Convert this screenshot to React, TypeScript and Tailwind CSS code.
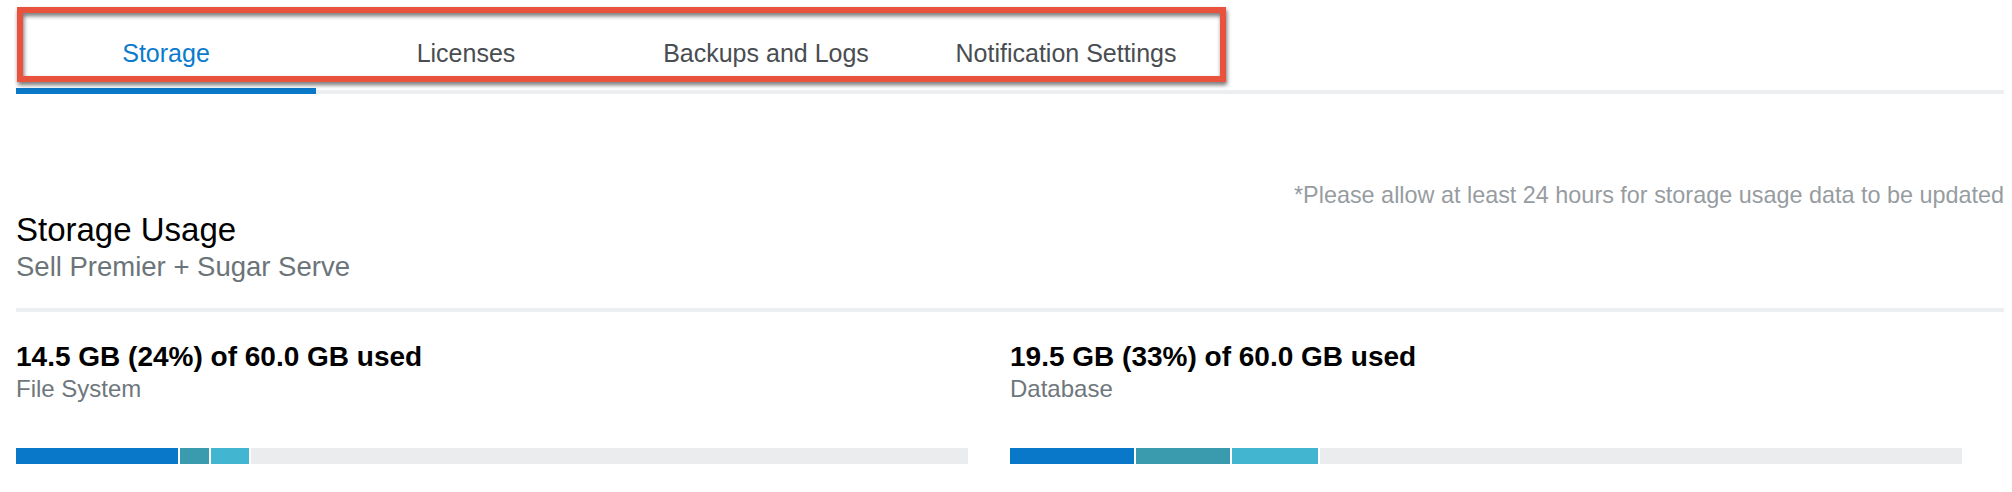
import React from "react";

type Seg = { w: number; color: string };

const tabs = ["Storage", "Licenses", "Backups and Logs", "Notification Settings"];

const usage: { value: string; label: string; segs: Seg[] }[] = [
  {
    value: "14.5 GB (24%) of 60.0 GB used",
    label: "File System",
    segs: [
      { w: 162, color: "bg-[#0a78c9]" },
      { w: 29, color: "bg-[#399bad]" },
      { w: 38, color: "bg-[#42b5d1]" },
    ],
  },
  {
    value: "19.5 GB (33%) of 60.0 GB used",
    label: "Database",
    segs: [
      { w: 124, color: "bg-[#0a78c9]" },
      { w: 94, color: "bg-[#399bad]" },
      { w: 86, color: "bg-[#42b5d1]" },
    ],
  },
];

export default function App() {
  return (
    <div
      className="relative w-[2012px] h-[492px] overflow-hidden bg-white pl-4 pr-2"
      style={{ fontFamily: '"Liberation Sans", Arial, sans-serif' }}
    >
      <nav className="flex h-[94px]">
        {tabs.map((t, i) => (
          <div
            key={t}
            className={
              i === 0
                ? "flex w-[300px] justify-center border-b-[6px] border-[#0a78c9] pt-[39px] text-[25px] leading-[28px] text-[#0b7bcd]"
                : "flex w-[300px] justify-center border-b-4 border-[#eceef0] pt-[39px] text-[25px] leading-[28px] text-[#494d51]"
            }
          >
            {t}
          </div>
        ))}
        <div className="flex-1 border-b-4 border-[#eceef0]" />
      </nav>

      <p className="mt-[88px] text-right text-[23.4px] leading-[26px] text-[#979ca1]">
        *Please allow at least 24 hours for storage usage data to be updated
      </p>

      <h1 className="mt-[5px] text-[33px] leading-[34px] text-black">Storage Usage</h1>
      <p className="mt-[5px] text-[27.5px] leading-[30px] text-[#6b7479]">Sell Premier + Sugar Serve</p>

      <div className="mt-[26px] h-[4px] bg-[#eceef0]" />

      <div className="mt-[30px] grid grid-cols-2">
        {usage.map((u) => (
          <div key={u.label} className="pr-[42px]">
            <div className="text-[28px] font-bold leading-[30px] text-black">{u.value}</div>
            <div className="mt-[4px] text-[24px] leading-[26px] text-[#6f777c]">{u.label}</div>
            <div className="mt-[46px] flex h-4 gap-[2px]">
              {u.segs.map((s, i) => (
                <div key={i} className={s.color} style={{ width: `${s.w}px` }} />
              ))}
              <div className="flex-1 bg-[#ebecee]" />
            </div>
          </div>
        ))}
      </div>

      <div className="pointer-events-none absolute left-[17px] top-[7px] h-[75px] w-[1209px] border-[6px] border-[#e9533d] drop-shadow-[1px_3px_2px_rgba(0,0,0,0.55)]" />
    </div>
  );
}
